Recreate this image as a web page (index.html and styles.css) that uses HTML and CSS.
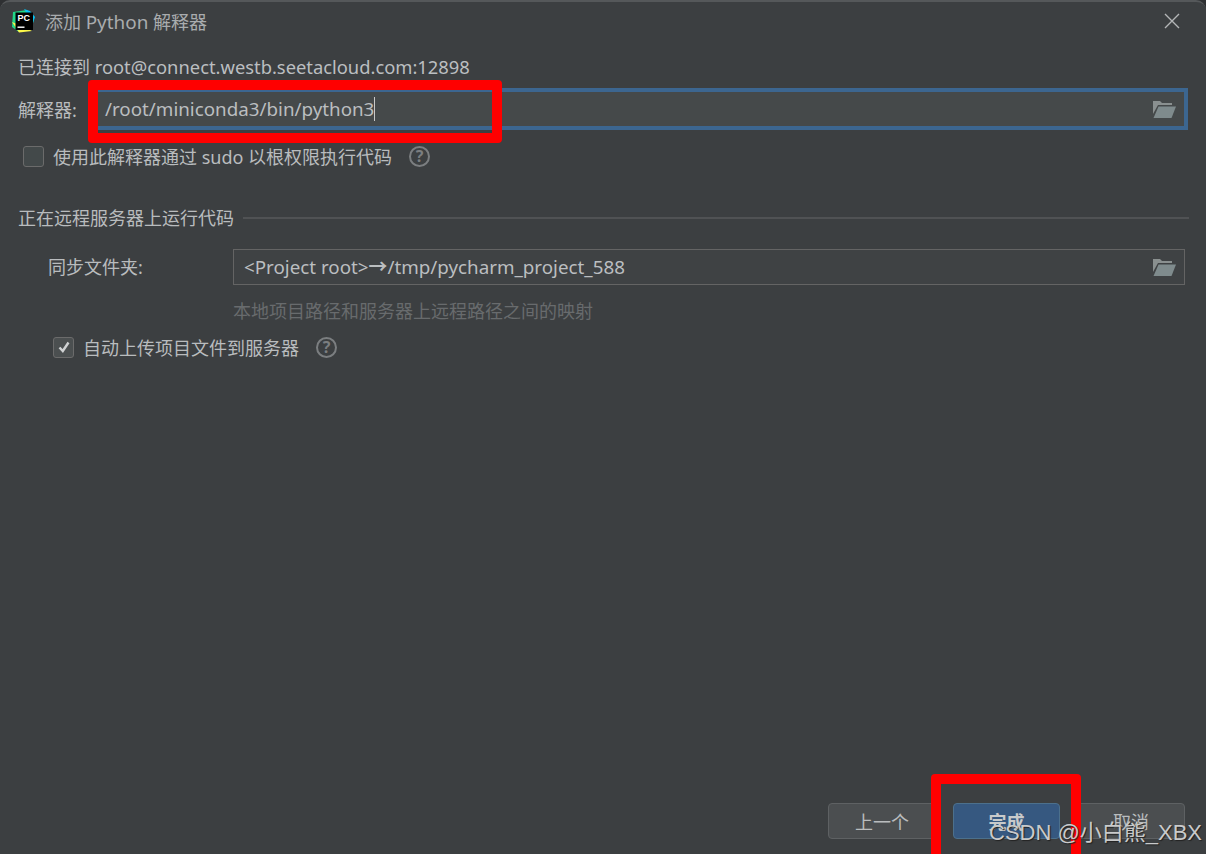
FILE: index.html
```html
<!DOCTYPE html>
<html lang="zh-CN">
<head>
<meta charset="utf-8">
<title>添加 Python 解释器</title>
<link rel="stylesheet" href="styles.css">
</head>
<body>
<div class="dialog">
  <header class="titlebar">
    <svg class="logo" viewBox="0 0 24 24" width="24" height="24" aria-hidden="true">
      <path d="M2 3 L16 1 L23 8 L21 20 L8 23 L1 18 Z" fill="#21d789"/>
      <path d="M13 0 L19 2 L24 8 L22 14 Z" fill="#07c3f2"/>
      <path d="M1 13 L8 23.5 L21 22 L11 17 Z" fill="#fcf84a"/>
      <rect x="4.5" y="3.5" width="17.5" height="17.5" fill="#000"/>
      <text x="6.5" y="12" class="logo-text">PC</text>
      <rect x="6.5" y="17.5" width="7" height="1.4" fill="#fff"/>
    </svg>
    <span class="title">添加 <span class="title-latin">Python</span> 解释器</span>
    <svg class="close" viewBox="0 0 16 16" width="16" height="16" aria-hidden="true">
      <path d="M1 1 L15 15 M15 1 L1 15" stroke="#b4b6b7" stroke-width="1.4" fill="none"/>
    </svg>
  </header>

  <main class="content">
    <p class="connected">已连接到 <span class="host">root@connect.westb.seetacloud.com:12898</span></p>

    <div class="row interp-row">
      <label class="interp-label">解释器:</label>
      <div class="field field-focus">
        <span class="value">/root/miniconda3/bin/python3</span><span class="caret"></span>
        <svg class="folder" viewBox="0 0 24 18" width="24" height="18" aria-hidden="true">
          <path d="M1 17 V1 H8 L10 3 H20 V5 H6 L1 14 Z" fill="#8a9090"/>
          <path d="M6.5 6.5 H24 L19.5 18 H1.5 Z" fill="#7f8b8d"/>
        </svg>
      </div>
    </div>

    <div class="row check-row sudo-row">
      <span class="checkbox"></span>
      <span class="check-text">使用此解释器通过 sudo 以根权限执行代码</span>
      <span class="help">?</span>
    </div>

    <div class="section-head">
      <span class="section-title">正在远程服务器上运行代码</span>
      <span class="section-line"></span>
    </div>

    <div class="section-body">
      <div class="row sync-row">
        <label class="sync-label">同步文件夹:</label>
        <div class="field field-plain">
          <span class="value">&lt;Project root&gt;<span class="arrow">→</span>/tmp/pycharm_project_588</span>
          <svg class="folder" viewBox="0 0 24 18" width="24" height="18" aria-hidden="true">
            <path d="M1 17 V1 H8 L10 3 H20 V5 H6 L1 14 Z" fill="#8a9090"/>
            <path d="M6.5 6.5 H24 L19.5 18 H1.5 Z" fill="#7f8b8d"/>
          </svg>
        </div>
      </div>
      <p class="hint">本地项目路径和服务器上远程路径之间的映射</p>
      <div class="row check-row upload-row">
        <span class="checkbox checked">
          <svg viewBox="0 0 14 14" width="14" height="14" aria-hidden="true">
            <path d="M2.5 7.5 L5.8 11 L11.5 2.5" stroke="#d0d2d3" stroke-width="2.4" fill="none"/>
          </svg>
        </span>
        <span class="check-text">自动上传项目文件到服务器</span>
        <span class="help">?</span>
      </div>
    </div>
  </main>

  <footer class="buttons">
    <button class="btn">上一个</button>
    <button class="btn btn-primary">完成</button>
    <button class="btn">取消</button>
  </footer>
</div>

<div class="mark mark-field"></div>
<div class="mark mark-button"></div>
<div class="watermark">CSDN @小白熊_XBX</div>
</body>
</html>
```
FILE: styles.css
```css
* { box-sizing: border-box; }
html, body { margin: 0; height: 100%; }
body {
  width: 1206px;
  height: 854px;
  overflow: hidden;
  position: relative;
  background: #2e3032;
  font-family: "Noto Sans", "Noto Sans CJK SC", sans-serif;
  font-size: 18px;
  color: #b9bcbe;
}
.dialog {
  height: 854px;
  background: #3c3f41;
  border-top: 2px solid #55585a;
  border-radius: 10px 10px 0 0;
  display: flex;
  flex-direction: column;
}
.titlebar {
  height: 42px;
  display: flex;
  align-items: center;
  padding: 0 26px 2px 11px;
  flex: none;
}
.logo { flex: none; margin-bottom: 2px; }
.logo-text { font: 700 9px "Liberation Sans", sans-serif; fill: #fff; }
.title { margin-left: 10px; color: #a9acae; line-height: 24px; }
.title-latin { font-size: 18.9px; }
.close { margin-left: auto; margin-bottom: 2px; }
.content {
  flex: 1;
  padding: 10px 18px 0;
  min-height: 0;
}
.connected { margin: 0; line-height: 26px; height: 26px; color: #bbbec0; }
.host { font-size: 18.35px; }
.row { display: flex; align-items: center; }
.interp-row { margin-top: 8px; }
.interp-label { width: 76px; flex: none; }
.field {
  display: flex;
  align-items: center;
  background: #45494a;
  flex: 1;
}
.field-focus {
  height: 42px;
  border: 4px solid #3c6690;
  padding-left: 7px;
  padding-right: 8px;
}
.field-plain {
  height: 36px;
  background: #3f4244;
  border: 1px solid #646464;
  padding-left: 10px;
  padding-right: 8px;
}
.value { font-size: 18.8px; line-height: 24px; color: #bbbec0; }
.arrow { font-weight: 700; }
.caret { width: 1px; height: 24px; background: #c8c8c8; }
.folder { margin-left: auto; flex: none; }
.check-row .check-text { margin-left: 9px; }
.checkbox {
  width: 21px;
  height: 21px;
  flex: none;
  background: #43494a;
  border: 1px solid #6b6b6b;
  border-radius: 3px;
  display: flex;
  align-items: center;
  justify-content: center;
}
.checked { background: #4b4f50; }
.help {
  width: 21px;
  height: 21px;
  flex: none;
  margin-left: 17px;
  border: 2px solid #7b7e80;
  border-radius: 50%;
  color: #7b7e80;
  font-size: 16px;
  font-weight: 700;
  line-height: 17px;
  text-align: center;
}
.sudo-row { margin: 6px 0 0 5px; height: 40px; }
.section-head {
  margin-top: 28px;
  display: flex;
  align-items: center;
  height: 26px;
  margin-right: -1px;
}
.section-line { flex: 1; height: 2px; background: #505254; margin: 2px 0 0 9px; }
.section-body { padding: 0 3px 0 30px; }
.sync-row { margin-top: 19px; }
.sync-label { width: 185px; flex: none; padding-bottom: 2px; }
.hint { margin: 13px 0 0 185px; line-height: 26px; color: #686b6d; }
.upload-row { margin: 3px 0 0 5px; height: 40px; }
.buttons {
  flex: none;
  display: flex;
  justify-content: flex-end;
  padding: 0 21px 15px 0;
}
.btn {
  width: 108px;
  height: 36px;
  margin-left: 17px;
  font: inherit;
  color: #b9bcbe;
  background: #4b4e50;
  border: 1px solid #5e6163;
  border-radius: 4px;
  padding: 0;
}
.btn-primary {
  width: 107px;
  background: #365880;
  border-color: #4c708c;
  font-weight: 700;
  color: #c8cacb;
}
.mark {
  position: absolute;
  border: 10px solid #ff0000;
  border-radius: 4px;
  pointer-events: none;
}
.mark-field { left: 88px; top: 80px; width: 414px; height: 63px; }
.mark-button { left: 931px; top: 774px; width: 150px; height: 90px; }
.watermark {
  position: absolute;
  left: 989px;
  top: 817px;
  font-family: "Liberation Sans", "Noto Sans CJK SC", sans-serif;
  font-size: 22px;
  line-height: 32px;
  white-space: nowrap;
  color: #c9cacb;
  text-shadow: 1px 1px 1px #222;
}
```
